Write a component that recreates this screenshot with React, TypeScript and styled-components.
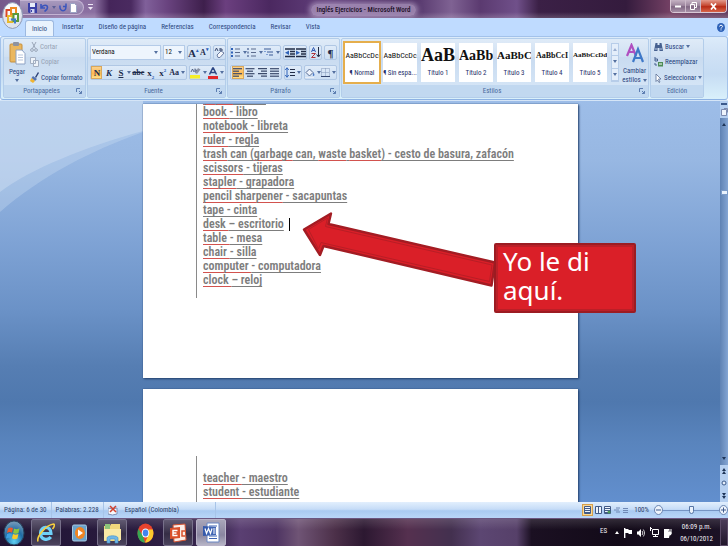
import React from 'react';
import styled, { createGlobalStyle, css } from 'styled-components';

const UI = '"Roboto Condensed", Roboto, "Liberation Sans", sans-serif';
const SERIF = '"Liberation Serif", serif';

const GlobalStyle = createGlobalStyle`
  * { box-sizing: border-box; }
  body { margin: 0; font-family: ${UI}; font-size: 7px; line-height: 10px; color: #33456b; }
  button, select, input { font: inherit; color: inherit; margin: 0; padding: 0; border: 0; background: none; }
  svg { display: block; flex: none; }
  ul { margin: 0; padding: 0; list-style: none; }
`;

/* ---------- window ---------- */

const Desktop = styled.div`
  position: relative;
  display: flex;
  flex-direction: column;
  width: 100%;
  height: 100vh;
  overflow: hidden;
`;

const TitleBar = styled.header`
  display: flex;
  align-items: flex-start;
  height: 18px;
  background:
    linear-gradient(180deg, transparent 12px, #ffffff30 18px),
    linear-gradient(90deg, #75588b 0, #8b70a3 10%, #8a6fa0 13%, #45255a 15%, #4a2a60 18%, #80609a 20%, #69437f 23%, #3e1f4c 28%, #6b3f7f 31%, #4b2860 37%, #62407c 45%, #4c2d63 56%, #7f6293 62%, #5b3a70 66%, #70508a 71%, #3b2046 74%, #341b3d 86%, #734064 92%, #603a5e 100%);
`;

const QuickAccess = styled.nav`
  display: flex;
  align-items: center;
  gap: 3px;
  height: 15px;
  margin-left: 20px;
  padding: 0 6px 0 8px;
  border: 1px solid #c3b3d2;
  border-left: 0;
  border-radius: 0 8px 8px 0;
  background: linear-gradient(#a799bd, #8d7ba8);
`;

const PlainButton = styled.button`
  display: flex;
  align-items: center;
  justify-content: center;
`;

const MoreButton = styled(PlainButton)`
  margin: 4px 0 0 4px;
`;

const WindowTitle = styled.h1`
  flex: 1;
  margin: 0;
  padding-right: 36px;
  font-size: 7px;
  font-weight: 500;
  line-height: 20px;
  text-align: center;
  color: #1c1027;
`;

const TitleGlow = styled.span`
  padding: 2px 6px;
  border-radius: 6px;
  background: #b7a2c8b0;
  box-shadow: 0 0 5px 2px #b7a2c8b0;
`;

const WindowButtons = styled.div`
  display: flex;
  height: 13px;
  margin-right: 1px;
  border: 1px solid #d9c9d6;
  border-top: 0;
  border-radius: 0 0 4px 4px;
  overflow: hidden;
`;

const WindowButton = styled(PlainButton)<{ $close?: boolean }>`
  width: ${p => (p.$close ? 25 : 15)}px;
  border-right: ${p => (p.$close ? 0 : '1px solid #cbb9c9')};
  background: ${p =>
    p.$close ? 'linear-gradient(#e39a8c, #c64b35 45%, #b82c17 55%, #d8654a)' : 'linear-gradient(#c5b3c4, #98819a 50%, #7f6783 55%, #a891a8)'};
`;

const OfficeButton = styled(PlainButton)`
  position: absolute;
  left: 2px;
  top: 2px;
  border-radius: 50%;
`;

/* ---------- ribbon ---------- */

const TabBar = styled.div`
  display: flex;
  align-items: stretch;
  height: 18px;
  padding: 0 3px 0 25px;
  background: #bfdbff;
`;

const Tab = styled.button<{ $active?: boolean }>`
  padding: 0 8px 0 7px;
  line-height: 19px;
  color: #2b4680;
  ${p =>
    p.$active &&
    css`
      padding: 0 6px;
      margin: 2px 1px 0 0;
      line-height: 16px;
      border: 1px solid #9db9e0;
      border-bottom: 0;
      border-radius: 3px 3px 0 0;
      background: #e9f3fd;
    `}
`;

const HelpButton = styled(PlainButton)`
  margin-left: auto;
`;

const Ribbon = styled.section`
  display: flex;
  gap: 1px;
  height: 64px;
  padding: 1px 23px 1px 2px;
  border: 1px solid #a3c2ea;
  border-bottom: 1px solid #8db2e3;
  border-radius: 3px;
  background: linear-gradient(#dcebfa, #cfe1f5 30%, #c6dcf3 60%, #d9f0fb);
`;

const Group = styled.section<{ $width?: number }>`
  display: flex;
  flex-direction: column;
  flex: ${p => (p.$width ? `0 0 ${p.$width}px` : '1 1 0')};
  min-width: 0;
  border: 1px solid #b3cdea;
  border-radius: 2px;
  background: linear-gradient(#dfebf8, #d0e0f2 30%, #c9dbf0 32%, #d8e8f8);
`;

const GroupBody = styled.div`
  display: flex;
  flex: 1;
  min-height: 0;
`;

const GroupLabel = styled.footer`
  display: flex;
  align-items: center;
  height: 12px;
  padding: 0 3px;
  background: #c1d8f0;
  color: #4a6a9c;
  line-height: 12px;
`;

const GroupName = styled.span`
  flex: 1;
  text-align: center;
`;

const PasteButton = styled(PlainButton)`
  flex-direction: column;
  justify-content: flex-start;
  width: 26px;
  padding-top: 2px;
  color: #2b4680;
  gap: 2px;
`;

const CommandList = styled.div<{ $inset?: boolean }>`
  display: flex;
  flex-direction: column;
  justify-content: space-between;
  flex: 1;
  padding: 1px 0 1px ${p => (p.$inset ? 3 : 0)}px;
`;

const Command = styled.button<{ $disabled?: boolean }>`
  display: flex;
  align-items: center;
  gap: 2px;
  height: 13px;
  white-space: nowrap;
  color: ${p => (p.$disabled ? '#96a2b4' : '#25417c')};
`;

const Rows = styled.div`
  display: flex;
  flex: 1;
  flex-direction: column;
  justify-content: space-between;
  padding: 6px 2px 5px;
`;

const ToolRow = styled.div`
  display: flex;
  align-items: center;
  gap: 2px;
  height: 15px;
`;

const ToolSet = styled.div<{ $grow?: number }>`
  display: flex;
  align-items: center;
  justify-content: space-around;
  flex: ${p => p.$grow ?? 1} 1 0;
  height: 15px;
  border: 1px solid #b0c7e4;
  border-radius: 2px;
  background: linear-gradient(#dfebf9, #cddff3);
`;

const Tool = styled(PlainButton)<{ $on?: boolean }>`
  gap: 2px;
  min-width: 11px;
  height: 13px;
  ${p =>
    p.$on &&
    css`
      border: 1px solid #d9a85c;
      background: linear-gradient(#fbd28e, #ffb94f 60%, #ffe08c);
    `}
`;

const Letter = styled.span<{ $size?: number; $italic?: boolean; $line?: string }>`
  font-family: ${SERIF};
  font-size: ${p => p.$size ?? 9}px;
  font-weight: 700;
  font-style: ${p => (p.$italic ? 'italic' : 'normal')};
  text-decoration: ${p => p.$line ?? 'none'};
  line-height: 12px;
  color: #1d2b4c;
`;

const Small = styled.span<{ $up?: boolean }>`
  font-size: 5px;
  vertical-align: ${p => (p.$up ? 'super' : 'sub')};
  line-height: 1px;
  color: #2a5db8;
`;

const PickerBox = styled.div<{ $width: number }>`
  display: grid;
  align-items: center;
  justify-items: end;
  flex: 0 0 ${p => p.$width}px;
  height: 15px;
  padding-right: 2px;
  border: 1px solid #b4cbe8;
  background: #eef5fd;
  & > * { grid-area: 1 / 1; }
  & > svg { pointer-events: none; }
`;

const Picker = styled.select`
  appearance: none;
  width: 100%;
  height: 13px;
  padding-left: 1px;
  font-size: 7px;
  line-height: 13px;
  color: #111;
`;

const Styles = styled.div`
  display: flex;
  flex: 1;
  gap: 4px;
  min-width: 0;
  padding: 4px 2px 3px 3px;
`;

const StyleCard = styled.button<{ $selected?: boolean }>`
  display: flex;
  flex-direction: column;
  align-items: center;
  flex: 1 1 0;
  min-width: 0;
  overflow: hidden;
  background: #fff;
  color: #26306a;
  outline: ${p => (p.$selected ? '2px solid #e5ae4c' : 'none')};
`;

const Preview = styled.span<{ $size: number; $sans?: boolean }>`
  width: 100%;
  height: 25px;
  font-family: ${p => (p.$sans ? UI : SERIF)};
  font-size: ${p => p.$size}px;
  font-weight: ${p => (p.$sans ? 400 : 700)};
  line-height: 25px;
  text-align: center;
  white-space: nowrap;
  color: #111;
`;

const GalleryScroll = styled.div`
  display: flex;
  flex-direction: column;
  flex: 0 0 8px;
  border: 1px solid #b7cde9;
  background: #e4eefa;
`;

const GalleryButton = styled(PlainButton)`
  flex: 1;
  border-bottom: 1px solid #b7cde9;
`;

const ChangeStyles = styled(PlainButton)`
  flex: 0 0 27px;
  flex-direction: column;
  justify-content: flex-start;
  gap: 3px;
  padding-top: 4px;
  line-height: 9px;
  color: #25417c;
`;

const Inline = styled.span`
  display: flex;
  align-items: center;
  gap: 2px;
`;

/* ---------- document ---------- */

const Workspace = styled.main`
  display: flex;
  flex: 1;
  min-height: 0;
  border-top: 1px solid #d5e5f7;
  background: linear-gradient(#9dbde8 0, #97b7e2 15%, #7fa3d5 35%, #6b92c7 52%, #567eb3 66%, #4f78ae 75%, #5984bd 85%, #628fce 100%);
`;

const Canvas = styled.div`
  position: relative;
  display: flex;
  flex: 1;
  flex-direction: column;
  gap: 11px;
  min-width: 0;
  padding: 3px 142px 0 143px;
  overflow: hidden;
`;

const Backdrop = styled.svg`
  position: absolute;
  left: 0;
  top: 0;
`;

const Paper = styled.article<{ $lead?: number; $tail?: number }>`
  position: relative;
  flex: none;
  padding: ${p => p.$lead ?? 0}px 20px ${p => p.$tail ?? 0}px 53px;
  background: #fff;
  box-shadow: 1px 1px 2px #23406b, 0 0 1px #31517f;
`;

const Clip = styled.div`
  overflow: hidden;
`;

const WordList = styled.ul<{ $cut?: boolean }>`
  padding: ${p => (p.$cut ? '0 0 11px 6px' : '15px 0 30px 6px')};
  margin-top: ${p => (p.$cut ? -13 : 0)}px;
  border-left: 1px solid #8a8a8a;
`;

const Entry = styled.li`
  font-size: 12px;
  font-weight: 600;
  line-height: 14px;
  white-space: nowrap;
  color: #7d7d7d;
`;

const Word = styled.span<{ $flagged?: boolean }>`
  text-decoration: underline 1px ${p => (p.$flagged ? '#d2524e' : '#7d7d7d')};
  text-underline-offset: 2px;
  text-decoration-skip-ink: none;
`;

const TextCaret = styled.span`
  display: inline-block;
  width: 1px;
  height: 13px;
  margin-left: 5px;
  vertical-align: middle;
  background: #000;
`;

const Arrow = styled.svg`
  position: absolute;
  left: 159px;
  top: 107px;
`;

const Callout = styled.aside`
  position: absolute;
  left: 351px;
  top: 139px;
  width: 142px;
  padding: 2px 6px 6px 7px;
  border: 2px solid #9c1c22;
  border-radius: 2px;
  background: #da1f28;
  box-shadow: inset 0 0 0 2px #bb1f27;
  font-family: "Noto Sans", "Open Sans", sans-serif;
  font-size: 26px;
  line-height: 29px;
  color: #fff;
`;

const ScrollBar = styled.aside`
  display: flex;
  flex-direction: column;
  align-items: center;
  flex: 0 0 8px;
  background: #a9c6ec;
`;

const ScrollTrack = styled.div`
  display: flex;
  flex-direction: column;
  align-items: center;
  flex: 1;
  width: 100%;
  padding: 5px 0;
  background: linear-gradient(90deg, #5f82b3, #84a5d3);
`;

const ScrollThumb = styled.button`
  width: 7px;
  height: 5px;
  margin: 64px 0 auto;
  border: 1px solid #7b9bc8;
  background: #eaf2fc;
`;

const ScrollEnd = styled.div`
  display: flex;
  flex-direction: column;
  align-items: center;
  justify-content: space-around;
  width: 100%;
  height: 37px;
  background: #b5cff0;
`;

const ScrollHead = styled(ScrollEnd)`
  height: 17px;
`;

/* ---------- status bar ---------- */

const StatusBar = styled.footer`
  display: flex;
  align-items: stretch;
  height: 16px;
  line-height: 16px;
  background: linear-gradient(#e2effd, #c6dcf7 45%, #a9caf1 55%, #b9d6f8);
  color: #2b4068;
`;

const StatusItem = styled.div<{ $edge?: boolean }>`
  display: flex;
  align-items: center;
  padding: 0 4px;
  border-right: ${p => (p.$edge ? '1px solid #a7c4e8' : '0')};
`;

const LanguageItem = styled(StatusItem)`
  padding: 0 36px 0 3px;
`;

const ViewButtons = styled.div`
  display: flex;
  align-items: center;
  gap: 1px;
  margin-left: auto;
`;

const ViewButton = styled(PlainButton)<{ $on?: boolean }>`
  width: ${p => (p.$on ? 11 : 8)}px;
  height: 12px;
  border: ${p => (p.$on ? '1px solid #d59f4c' : '0')};
  background: ${p => (p.$on ? '#fbd894' : 'none')};
`;

const ZoomLabel = styled.span`
  padding: 0 5px;
`;

const ZoomSlider = styled.input`
  appearance: none;
  width: 56px;
  height: 16px;
  background: linear-gradient(#7594c4, #7594c4) center / 100% 1px no-repeat;
  &::-webkit-slider-thumb {
    appearance: none;
    width: 5px;
    height: 8px;
    border: 1px solid #5776a6;
    border-radius: 0 0 3px 3px;
    background: #e9f1fb;
  }
`;

/* ---------- taskbar ---------- */

const TaskBar = styled.footer`
  display: flex;
  align-items: stretch;
  height: 28px;
  border-top: 1px solid #6b5680;
  background:
    linear-gradient(180deg, #ffffff22, transparent 40%),
    linear-gradient(90deg, #201333 0, #2a1c40 20%, #3a2750 30%, #5a3f72 33%, #4f3563 38%, #6f5475 41%, #4c3049 46%, #2c1831 50%, #55304f 56%, #43304f 62%, #5c4672 66%, #564069 71%, #1b1022 73%, #120a18 85%, #1c1226 100%);
`;

const StartButton = styled(PlainButton)`
  width: 31px;
  padding-right: 3px;
`;

const TaskButton = styled(PlainButton)<{ $state?: 'open' | 'active' }>`
  width: 30px;
  margin-right: 3px;
  border-radius: 2px;
  ${p =>
    p.$state &&
    css`
      border: 1px solid ${p.$state === 'active' ? '#b9b3c8' : '#77708a'};
      background: ${p.$state === 'active' ? 'linear-gradient(#a9a6b9, #8a86a0 60%, #b6b4c6)' : 'linear-gradient(#615a72, #352d45 55%, #4b435d)'};
    `}
`;

const Tray = styled.div`
  display: flex;
  align-items: center;
  gap: 5px;
  margin-left: auto;
  color: #f1eef5;
`;

const Clock = styled.time`
  margin: 0 2px 0 3px;
  font-size: 7px;
  line-height: 12px;
  text-align: center;
`;

const ShowDesktop = styled.button`
  align-self: stretch;
  width: 8px;
  border: 1px solid #5a4a66;
  background: linear-gradient(#4a3b57, #21162b);
`;

const TrayLanguage = styled.span`
  margin: 0 3px 4px 0;
`;

/* ---------- icons ---------- */

const Caret = ({ up, c = '#5470a0' }: { up?: boolean; c?: string }) => (
  <svg width="4" height="3" viewBox="0 0 4 3"><path d={up ? 'M0 3h4L2 0z' : 'M0 0h4L2 3z'} fill={c} /></svg>
);
const Launcher = () => (
  <svg width="6" height="6" viewBox="0 0 6 6" fill="none" stroke="#5c7db0"><path d="M.5 4V.5H4M3 3l2.500 2.500M5.500 3v2.500H3" /></svg>
);
const SaveIcon = () => (
  <svg width="9" height="10" viewBox="0 0 9 10"><path d="M0 0h9v10H1L0 9z" fill="#3a3fa6" /><path d="M2 0h5v4H2z" fill="#e8ecfa" /><path d="M2.500 6h4v4h-4z" fill="#cdd2ef" /><path d="M3 7h1v2H3z" fill="#3a3fa6" /></svg>
);
const UndoIcon = () => (
  <svg width="9" height="9" viewBox="0 0 9 9"><path d="M1 1v4h4M1.500 4.500C3 1.500 7.500 1.500 7.500 4.500 7.500 6.500 6 7.500 4.500 8.500" fill="none" stroke="#3b55bd" strokeWidth="1.600" /></svg>
);
const RedoIcon = () => (
  <svg width="8" height="9" viewBox="0 0 8 9"><path d="M1 2.500C.6 6 2 7.700 4 7.700S7.500 6 6.500 2.500M4 3.500h3V.5" fill="none" stroke="#3b55bd" strokeWidth="1.500" /></svg>
);
const PageIcon = () => (
  <svg width="7" height="10" viewBox="0 0 7 10"><path d="M.5.5h4l2 2v7h-6z" fill="#fff" stroke="#9aa3c4" /></svg>
);
const OfficeLogo = () => (
  <svg width="21" height="27" viewBox="0 0 21 27">
    <ellipse cx="10.500" cy="13.500" rx="10" ry="13" fill="#dfe3ec" stroke="#8e9ab4" />
    <ellipse cx="10.500" cy="9" rx="8" ry="7.500" fill="#fff" opacity=".8" />
    <g fill="none" strokeWidth="2">
      <rect x="4.500" y="8" width="4.500" height="6" stroke="#d8482a" />
      <rect x="9" y="6" width="5" height="6" stroke="#ee8a23" />
      <rect x="6" y="14" width="4.500" height="6" stroke="#e7b92c" />
      <rect x="11.500" y="12" width="4.500" height="7" stroke="#5a9a3c" />
      <path d="M9 17.500h4v4" stroke="#3f7ccb" />
    </g>
  </svg>
);
const HelpIcon = () => (
  <svg width="8" height="9" viewBox="0 0 8 9"><ellipse cx="4" cy="4.500" rx="4" ry="4.500" fill="#2e62b8" /><path d="M2.500 3.500C2.500 1.800 5.600 1.800 5.600 3.500 5.600 4.500 4 4.400 4 5.600M4 6.400v1" fill="none" stroke="#fff" /></svg>
);
const PasteIcon = () => (
  <svg width="17" height="24" viewBox="0 0 17 24">
    <rect x="1" y="3" width="12" height="18" rx="1" fill="#eab75f" stroke="#c68f3c" /><rect x="4" y="1" width="6" height="4" rx="1" fill="#8e93a0" />
    <path d="M7 9h6l3 3.500V23H7z" fill="#fff" stroke="#8ea2c4" /><path d="M9 14h5M9 16.500h5M9 19h5" stroke="#b9c6dc" />
  </svg>
);
const CutIcon = () => (
  <svg width="8" height="10" viewBox="0 0 8 10" fill="none" stroke="#9aa6b8"><path d="M2 0l3.500 6.500M6 0L2.500 6.500" /><circle cx="2" cy="8" r="1.400" /><circle cx="6" cy="8" r="1.400" /></svg>
);
const CopyIcon = () => (
  <svg width="9" height="10" viewBox="0 0 9 10" fill="#eef3f9" stroke="#a3afc2"><path d="M.5.5h5v6h-5zM3.500 3.500h5v6h-5z" /></svg>
);
const BrushIcon = () => (
  <svg width="9" height="11" viewBox="0 0 9 11"><path d="M5 5l3-5 1 1-3 5z" fill="#2d4278" /><path d="M3 4l4 3-2 2L1.500 6z" fill="#5573ae" /><path d="M1.500 6L5 9l-2 2-3-2z" fill="#f0b430" /></svg>
);
const Lines = ({ w, centered }: { w: number[]; centered?: boolean }) => (
  <svg width="10" height="9" viewBox="0 0 10 9">
    {w.map((n, i) => <path key={i} d={`M${centered ? (10 - n) / 2 : 0} ${i * 2.5 + 0.7}h${n}`} stroke="#3b4a6b" strokeWidth="1.200" />)}
  </svg>
);
const ListIcon = ({ lead }: { lead: string }) => (
  <svg width="10" height="9" viewBox="0 0 10 9"><path d="M4 1h5M4 4.500h5M4 8h5" stroke="#5a6a8c" /><path d="M0 1h2M0 4.500h2M0 8h2" stroke={lead} strokeWidth="2" /></svg>
);
const LevelIcon = () => (
  <svg width="10" height="9" viewBox="0 0 10 9" stroke="#3b5a96"><path d="M0 1h7M3 4h6M5 7h4" /><path d="M1 3v1M3 6v1" stroke="#2a5db8" /></svg>
);
const IndentIcon = ({ out }: { out?: boolean }) => (
  <svg width="10" height="10" viewBox="0 0 10 10"><path d="M0 1h10M5 3.500h5M5 6h5M0 8.500h10" stroke="#222c46" strokeWidth="1.300" /><path d={out ? 'M4 2.500v4.500L0 4.700z' : 'M0 2.500v4.500l4-2.300z'} fill="#2f62b8" /></svg>
);
const SortIcon = () => (
  <svg width="10" height="11" viewBox="0 0 10 11" fill="none"><path d="M.5 5L2.500.5 4.500 5M1.200 3.500h2.600" stroke="#2f58b0" /><path d="M.5 6.500h4l-4 4h4" stroke="#b0343c" /><path d="M7.500 0v9M5.700 7.500l1.800 2.500 1.800-2.500" stroke="#222c46" /></svg>
);
const SpacingIcon = () => (
  <svg width="10" height="11" viewBox="0 0 10 11"><path d="M2 1v9M.3 3L2 .7 3.700 3M.3 8L2 10.300 3.700 8" fill="none" stroke="#2f62b8" /><path d="M5 2.500h5M5 5.500h5M5 8.500h5" stroke="#222c46" /></svg>
);
const BucketIcon = () => (
  <svg width="10" height="10" viewBox="0 0 10 10"><path d="M1 4.500L4.500 1 8 4.500 4.500 8z" fill="#eef3fb" stroke="#566b93" /><path d="M8.500 4.500C10 6.500 9.500 8 8.500 8S7.500 6.500 8.500 4.500z" fill="#4a78c4" /><path d="M0 9.500h9" stroke="#e9edf5" /></svg>
);
const BorderIcon = () => (
  <svg width="9" height="9" viewBox="0 0 9 9" fill="none"><path d="M.5.500h8v8h-8zM4.500.500v8M.5 4.500h8" stroke="#8396b8" strokeDasharray="1 1" /><path d="M0 8.500h9" stroke="#34466e" /></svg>
);
const EraserIcon = () => (
  <svg width="11" height="11" viewBox="0 0 11 11"><path d="M1 4L2.500 1 4 4M6 1v3h2V2H6" fill="none" stroke="#3a4a70" /><path d="M3 8l4-4 3 2-4 4.500H4z" fill="#f5f7fb" stroke="#6d7ea2" /></svg>
);
const MarkerIcon = () => (
  <svg width="11" height="12" viewBox="0 0 11 12"><path d="M1 5l1.500-3L4 5M5 1.500V5h1.500V3H5" fill="none" stroke="#38476c" strokeWidth=".8" /><path d="M5 6l3-5 2.500 1.500L7 7z" fill="#8b93a6" /><rect y="8" width="10" height="3.500" fill="#f5ee27" /></svg>
);
const BigAIcon = () => (
  <svg width="20" height="21" viewBox="0 0 20 21" fill="none">
    <path d="M2 13L6.500 2 11 13M3.500 9h6" stroke="#b04fc0" strokeWidth="2.200" /><path d="M8 19L13 6l5 13M9.500 15h7" stroke="#3e78c8" strokeWidth="2.200" />
  </svg>
);
const FindIcon = () => (
  <svg width="9" height="10" viewBox="0 0 9 10"><path d="M1.500 1h2v2h2V1h2L9 9H5.500V6h-2v3H0z" fill="#46608f" /><path d="M1 7h2M6 7h2" stroke="#b9c9e4" /></svg>
);
const ReplaceIcon = () => (
  <svg width="9" height="10" viewBox="0 0 9 10"><path d="M1 0v4h2.500V2H1M1 6v2h2" fill="none" stroke="#46608f" /><path d="M4 5h5v4.500H4z" fill="#4d8b55" /><path d="M5 7h3" stroke="#fff" /></svg>
);
const SelectIcon = () => (
  <svg width="8" height="10" viewBox="0 0 8 10"><path d="M2 1l5 5H4.500L6 9l-1 .5L3.500 7 2 8.500z" fill="#fff" stroke="#5a6e96" strokeWidth=".8" /></svg>
);
const ProofIcon = () => (
  <svg width="10" height="11" viewBox="0 0 10 11"><path d="M0 3l4.500 1L9 3v6L4.500 10 0 9z" fill="#f6f8fc" stroke="#7f8fb4" /><path d="M2 1l6 6M8 1L2 7" stroke="#d0412e" strokeWidth="1.500" /></svg>
);
const ViewIcon = ({ kind }: { kind: number }) => (
  <svg width="7" height="8" viewBox="0 0 7 8" fill="none" stroke={kind > 2 ? '#7089b5' : '#425a86'}>
    {kind < 3 && <path d="M.5.500h6v7h-6z" fill="#eef4fc" />}
    <path d={kind === 1 ? 'M3.500 1v6' : kind === 3 ? 'M3 2h4M1 4h5M3 6h4' : 'M1 2.500h5M1 4.500h5M1 6.500h5'} />
    {kind === 2 && <circle cx="5" cy="6" r="1.500" fill="#4a9a58" stroke="none" />}
  </svg>
);
const ZoomIcon = ({ plus }: { plus?: boolean }) => (
  <svg width="9" height="10" viewBox="0 0 9 10" stroke="#6a84b0"><ellipse cx="4.500" cy="5" rx="4" ry="4.500" fill="#eef4fc" /><path d={plus ? 'M2 5h5M4.500 2.500v5' : 'M2 5h5'} stroke="#3f5a8c" /></svg>
);
const WindowsLogo = () => (
  <svg width="22" height="26" viewBox="0 0 22 26">
    <defs><radialGradient id="orb" cx=".5" cy=".85" r=".9"><stop offset="0" stopColor="#5fd0f2" /><stop offset=".5" stopColor="#1f6ba5" /><stop offset="1" stopColor="#8aa6bd" /></radialGradient></defs>
    <ellipse cx="11" cy="13" rx="10" ry="12" fill="url(#orb)" stroke="#26455f" />
    <path d="M5 8.500c2-1.500 3.500-1.200 5-.3l-1 4.500c-1.500-.8-3-1-5 .3z" fill="#ee5a2a" /><path d="M11 8.500c2 1 3.500.8 5.500-.2l-1 4.700c-2 1-3.500 1-5.400 0z" fill="#8cc63e" />
    <path d="M4 14c2-1.200 3.500-1 5-.2l-1 4.400c-1.500-.8-3-.8-5 .4z" fill="#3fa0e0" /><path d="M10 14c2 1 3.500.8 5.400 0l-1 4.500c-2 1-3.500.8-5.400-.2z" fill="#fbc926" />
  </svg>
);
const IeLogo = () => (
  <svg width="18" height="22" viewBox="0 0 18 22" fill="none">
    <path d="M13.800 15c-3 4-10.300 3-10.300-4C3.500 3.500 14 3.500 14 11.500H5" stroke="#6fd0f8" strokeWidth="3.200" />
    <path d="M1 19.500C-.5 15 8 3.500 16.500 2c1.500 0 1 3-1 5" stroke="#f6cf3e" strokeWidth="1.600" />
  </svg>
);
const PlayerLogo = () => (
  <svg width="15" height="18" viewBox="0 0 15 18"><rect x=".5" y="1" width="14" height="16" rx="1.500" fill="#6aa3cb" stroke="#a8c9e2" /><ellipse cx="8" cy="9" rx="5" ry="6" fill="#f08421" /><path d="M6 5.500v7l5-3.500z" fill="#fff" /></svg>
);
const FolderLogo = () => (
  <svg width="19" height="22" viewBox="0 0 19 22"><path d="M1 4h6l1-2h9v17H1z" fill="#f0d77c" /><path d="M2 2h5v5H2z" fill="#8cc57a" /><path d="M1 7h17v11H1z" fill="#f9e9a6" /><path d="M4 21v-5c0-3 11-3 11 0v5h-3v-4H7v4z" fill="#6fb7e6" stroke="#3f8fc9" strokeWidth=".6" /></svg>
);
const ChromeLogo = () => (
  <svg width="17" height="20" viewBox="0 0 17 20">
    <ellipse cx="8.500" cy="10" rx="8" ry="9.500" fill="#e8432e" /><path d="M1.300 5.800L6 13l2 6.500C2 19.500-1 12 1.300 5.800z" fill="#36a852" /><path d="M8 19.500L11.500 12V6.500h4.300C18 13 14 19.500 8 19.500z" fill="#fbca2d" />
    <ellipse cx="8.500" cy="10" rx="3.800" ry="4.500" fill="#fff" /><ellipse cx="8.500" cy="10" rx="2.800" ry="3.400" fill="#4384ee" />
  </svg>
);
const PptLogo = () => (
  <svg width="17" height="20" viewBox="0 0 17 20"><path d="M3 2l12-1 1 16-12 2z" fill="#fbeee8" stroke="#d35230" /><path d="M0 5l10-1v11L0 16z" fill="#d9502b" /><path d="M7.500 7.500H3v5h4.500M3 10h3.500" fill="none" stroke="#fff" strokeWidth="1.400" /><path d="M15 8h-3v5h3" fill="none" stroke="#d9502b" strokeWidth="1.500" /></svg>
);
const WordLogo = () => (
  <svg width="17" height="21" viewBox="0 0 17 21"><path d="M4 1h12v19H4z" fill="#fff" stroke="#6b87c4" /><path d="M6 4h8M6 14h8M6 16.500h8" stroke="#3c62b4" /><path d="M0 4l13 1v8L0 14z" fill="#2b54ac" opacity=".9" /><path d="M2 6.500l1.500 5 2-5 2 5 1.500-5M10 7h2.500M10 9h2.500M10 11h2.500" fill="none" stroke="#fff" strokeWidth="1.200" /></svg>
);
const FlagIcon = () => (
  <svg width="8" height="10" viewBox="0 0 8 10"><path d="M.7 0v10" stroke="#fff" strokeWidth="1.400" /><path d="M1 1h3l1 1h3v4H5L4 5H1z" fill="#fff" /></svg>
);
const SpeakerIcon = () => (
  <svg width="8" height="10" viewBox="0 0 8 10"><path d="M0 3.500h1.500L4 1v8L1.500 6.500H0z" fill="#fff" /><path d="M5 3c1 1.300 1 2.700 0 4M6.300 1.500c1.600 2.200 1.600 4.800 0 7" fill="none" stroke="#fff" strokeWidth=".8" /></svg>
);
const NetworkIcon = () => (
  <svg width="9" height="11" viewBox="0 0 9 11" fill="none" stroke="#fff"><path d="M2.500 2.500h6v5h-6zM3 9.500h5M5.500 7.500v2" /><path d="M.5 0v4M0 1.500h2" /></svg>
);
const PowerIcon = () => (
  <svg width="8" height="11" viewBox="0 0 8 11"><path d="M0 2h5v9H0z" fill="#fff" /><path d="M4 4h4v3L6 9v2" fill="#fff" stroke="#1a1022" strokeWidth=".6" /><path d="M5 2v2M7 2v2" stroke="#fff" /></svg>
);

/* ---------- content ---------- */

const tabs = ['Inicio', 'Insertar', 'Diseño de página', 'Referencias', 'Correspondencia', 'Revisar', 'Vista'];

const gallery: { text: string; name: string; size: number; sans?: boolean }[] = [
  { text: 'AaBbCcDc', name: '¶ Normal', size: 8, sans: true },
  { text: 'AaBbCcDc', name: '¶ Sin espa...', size: 8, sans: true },
  { text: 'AaB', name: 'Título 1', size: 18 },
  { text: 'AaBb', name: 'Título 2', size: 14 },
  { text: 'AaBbC', name: 'Título 3', size: 11 },
  { text: 'AaBbCcI', name: 'Título 4', size: 8 },
  { text: 'AaBbCcDd', name: 'Título 5', size: 7 },
];

type Part = string | { bad: string };
const bad = (s: string): Part => ({ bad: s });

const classroom: Part[][] = [
  [bad('paper '), '- papel'],
  [bad('book '), '- libro'],
  [bad('notebook'), ' - libreta'],
  [bad('ruler '), '- regla'],
  [bad('trash'), ' can (', bad('garbage'), ' can, ', bad('waste'), ' ', bad('basket'), ') - cesto de basura, zafacón'],
  [bad('scissors'), ' - tijeras'],
  [bad('stapler'), ' - grapadora'],
  [bad('pencil sharpener'), ' - sacapuntas'],
  ['tape - cinta'],
  [bad('desk '), '– escritorio'],
  [bad('table '), '- mesa'],
  [bad('chair '), '- silla'],
  [bad('computer '), '- computadora'],
  [bad('clock '), '– reloj'],
];
const people: Part[][] = [
  [bad('teacher '), '- maestro'],
  [bad('student '), '- estudiante'],
];

const Words = ({ parts, caret }: { parts: Part[]; caret?: boolean }) => (
  <Entry>
    {parts.map((p, i) => (typeof p === 'string' ? <Word key={i}>{p}</Word> : <Word key={i} $flagged>{p.bad}</Word>))}
    {caret && <TextCaret />}
  </Entry>
);

const RibbonGroup = ({ name, width, launcher, children }: { name: string; width?: number; launcher?: boolean; children: React.ReactNode }) => (
  <Group $width={width} aria-label={name}>
    <GroupBody>{children}</GroupBody>
    <GroupLabel>
      <GroupName>{name}</GroupName>
      {launcher && <PlainButton aria-label={`Opciones de ${name}`}><Launcher /></PlainButton>}
    </GroupLabel>
  </Group>
);

export default function App() {
  return (
    <Desktop>
      <GlobalStyle />
      <TitleBar>
        <QuickAccess aria-label="Acceso rápido">
          <PlainButton aria-label="Guardar"><SaveIcon /></PlainButton>
          <PlainButton aria-label="Deshacer"><UndoIcon /></PlainButton>
          <Caret c="#5d5f96" />
          <PlainButton aria-label="Rehacer"><RedoIcon /></PlainButton>
          <PlainButton aria-label="Nuevo"><PageIcon /></PlainButton>
        </QuickAccess>
        <MoreButton aria-label="Más comandos">
          <svg width="5" height="7" viewBox="0 0 5 7"><path d="M0 .5h5" stroke="#eee6f5" /><path d="M0 3h5L2.500 6z" fill="#eee6f5" /></svg>
        </MoreButton>
        <WindowTitle><TitleGlow>Inglés Ejercicios - Microsoft Word</TitleGlow></WindowTitle>
        <WindowButtons>
          <WindowButton aria-label="Minimizar"><svg width="6" height="3"><path d="M0 1.500h6" stroke="#fff" strokeWidth="2" /></svg></WindowButton>
          <WindowButton aria-label="Restaurar"><svg width="7" height="8" viewBox="0 0 7 8" fill="none" stroke="#fff"><path d="M2 2V.5h4.500v5H5M.5 2.500h4v5h-4z" /></svg></WindowButton>
          <WindowButton $close aria-label="Cerrar"><svg width="7" height="7" viewBox="0 0 7 7"><path d="M1 0.500l5 6M6 .5l-5 6" stroke="#fff" strokeWidth="1.800" /></svg></WindowButton>
        </WindowButtons>
      </TitleBar>

      <TabBar role="tablist">
        {tabs.map((t, i) => <Tab key={t} role="tab" aria-selected={i === 0} $active={i === 0}>{t}</Tab>)}
        <HelpButton aria-label="Ayuda"><HelpIcon /></HelpButton>
      </TabBar>
      <OfficeButton aria-label="Botón de Office"><OfficeLogo /></OfficeButton>

      <Ribbon>
        <RibbonGroup name="Portapapeles" width={83} launcher>
          <PasteButton><PasteIcon />Pegar<Caret /></PasteButton>
          <CommandList>
            <Command $disabled><CutIcon />Cortar</Command>
            <Command $disabled><CopyIcon />Copiar</Command>
            <Command><BrushIcon />Copiar formato</Command>
          </CommandList>
        </RibbonGroup>

        <RibbonGroup name="Fuente" width={139} launcher>
          <Rows>
            <ToolRow>
              <PickerBox $width={71}><Picker aria-label="Fuente"><option>Verdana</option></Picker><Caret /></PickerBox>
              <PickerBox $width={22}><Picker aria-label="Tamaño"><option>12</option></Picker><Caret /></PickerBox>
              <ToolSet $grow={2}>
                <Tool aria-label="Agrandar fuente"><Letter $size={11}>A<Small $up>▴</Small></Letter></Tool>
                <Tool aria-label="Encoger fuente"><Letter $size={8}>A<Small $up>▾</Small></Letter></Tool>
              </ToolSet>
              <ToolSet><Tool aria-label="Borrar formato"><EraserIcon /></Tool></ToolSet>
            </ToolRow>
            <ToolRow>
              <ToolSet $grow={8}>
                <Tool $on><Letter>N</Letter></Tool>
                <Tool><Letter $italic>K</Letter></Tool>
                <Tool><Letter $line="underline">S</Letter></Tool>
                <Caret />
                <Tool><Letter $size={8} $line="line-through">abc</Letter></Tool>
                <Tool><Letter>x<Small>2</Small></Letter></Tool>
                <Tool><Letter>x<Small $up>2</Small></Letter></Tool>
                <Tool><Letter $size={8}>Aa</Letter><Caret /></Tool>
              </ToolSet>
              <ToolSet $grow={3}>
                <Tool aria-label="Resaltado"><MarkerIcon /><Caret /></Tool>
                <Tool aria-label="Color de fuente">
                  <svg width="10" height="12" viewBox="0 0 10 12"><path d="M1.500 7.500L4.700 1h.6L8.500 7.500M3 5.500h4" fill="none" stroke="#2c4684" strokeWidth="1.500" /><rect y="9" width="10" height="3" fill="#e3262a" /></svg>
                  <Caret />
                </Tool>
              </ToolSet>
            </ToolRow>
          </Rows>
        </RibbonGroup>

        <RibbonGroup name="Párrafo" width={113} launcher>
          <Rows>
            <ToolRow>
              <ToolSet $grow={5}>
                <Tool aria-label="Viñetas"><ListIcon lead="#2f62b8" /><Caret /></Tool>
                <Tool aria-label="Numeración"><ListIcon lead="#7f93b8" /><Caret /></Tool>
                <Tool aria-label="Lista multinivel"><LevelIcon /><Caret /></Tool>
              </ToolSet>
              <ToolSet $grow={2}>
                <Tool aria-label="Disminuir sangría"><IndentIcon out /></Tool>
                <Tool aria-label="Aumentar sangría"><IndentIcon /></Tool>
              </ToolSet>
              <ToolSet><Tool aria-label="Ordenar"><SortIcon /></Tool></ToolSet>
              <ToolSet><Tool aria-label="Mostrar todo"><Letter $size={11}>¶</Letter></Tool></ToolSet>
            </ToolRow>
            <ToolRow>
              <ToolSet $grow={5}>
                <Tool $on aria-label="Izquierda"><Lines w={[9, 6, 9, 6]} /></Tool>
                <Tool aria-label="Centrar"><Lines w={[9, 6, 9, 6]} centered /></Tool>
                <Tool aria-label="Derecha"><svg width="10" height="9" viewBox="0 0 10 9"><path d="M0 .7h9M3 3.200h6M0 5.700h9M3 8.200h6" stroke="#3b4a6b" strokeWidth="1.200" /></svg></Tool>
                <Tool aria-label="Justificar"><Lines w={[9, 9, 9, 9]} /></Tool>
              </ToolSet>
              <ToolSet $grow={1}><Tool aria-label="Interlineado"><SpacingIcon /><Caret /></Tool></ToolSet>
              <ToolSet $grow={3}>
                <Tool aria-label="Sombreado"><BucketIcon /><Caret /></Tool>
                <Tool aria-label="Bordes"><BorderIcon /><Caret /></Tool>
              </ToolSet>
            </ToolRow>
          </Rows>
        </RibbonGroup>

        <RibbonGroup name="Estilos" launcher>
          <Styles>
            {gallery.map((g, i) => (
              <StyleCard key={g.name} $selected={i === 0}><Preview $size={g.size} $sans={g.sans}>{g.text}</Preview>{g.name}</StyleCard>
            ))}
            <GalleryScroll>
              <GalleryButton aria-label="Arriba"><Caret up c="#9aaed0" /></GalleryButton>
              <GalleryButton aria-label="Abajo"><Caret /></GalleryButton>
              <GalleryButton aria-label="Más"><Caret /></GalleryButton>
            </GalleryScroll>
          </Styles>
          <ChangeStyles><BigAIcon /><span>Cambiar<Inline>estilos <Caret /></Inline></span></ChangeStyles>
        </RibbonGroup>

        <RibbonGroup name="Edición" width={54}>
          <CommandList $inset>
            <Command><FindIcon />Buscar <Caret /></Command>
            <Command><ReplaceIcon />Reemplazar</Command>
            <Command><SelectIcon />Seleccionar <Caret /></Command>
          </CommandList>
        </RibbonGroup>
      </Ribbon>

      <Workspace>
        <Canvas>
          <Backdrop width="143" height="120" viewBox="0 0 143 120">
            <path d="M0 0h143v31C90 50 40 76 0 111z" fill="#d5e4f4" opacity=".3" />
            <path d="M0 0h143v30C85 46 30 68 0 91z" fill="#dce9f6" opacity=".35" />
          </Backdrop>
          <Paper $tail={80}>
            <Clip>
              <WordList $cut>{classroom.map((p, i) => <Words key={i} parts={p} caret={i === 9} />)}</WordList>
            </Clip>
            <Arrow width="196" height="78" viewBox="302 211 196 78" aria-hidden="true">
              <path d="M304 229.500L331 213.500 328.500 224 495 262.500 491.500 285.500 323.500 246 320 255z" fill="#da1f28" stroke="#a31c23" strokeWidth="2.400" strokeLinejoin="round" />
              <path d="M308.500 229.500L327.500 218 325.500 226.500 492 265 489.500 281.500 321 242.500 318.500 249z" fill="none" stroke="#b81e26" />
            </Arrow>
            <Callout>Yo le di aquí.</Callout>
          </Paper>
          <Paper $lead={67}>
            <WordList>{people.map((p, i) => <Words key={i} parts={p} />)}</WordList>
          </Paper>
        </Canvas>
        <ScrollBar aria-label="Desplazamiento">
          <ScrollHead>
            <svg width="6" height="2"><path d="M0 1h6" stroke="#3c5a8c" strokeWidth="2" /></svg>
            <svg width="7" height="8" viewBox="0 0 7 8" fill="#eef4fc" stroke="#7c8bb0"><path d="M.5 1.500h5v6h-5zM3 .5h3.500v4" /></svg>
          </ScrollHead>
          <ScrollTrack>
            <Caret up c="#1f3558" />
            <ScrollThumb aria-label="Posición" />
            <Caret c="#1f3558" />
          </ScrollTrack>
          <ScrollEnd>
            <svg width="4" height="6"><path d="M0 3l2-3 2 3zM0 6l2-3 2 3z" fill="#1f3558" /></svg>
            <svg width="6" height="6"><circle cx="3" cy="3" r="2" fill="#e6effa" stroke="#3c5a8c" /></svg>
            <svg width="4" height="6"><path d="M0 0l2 3 2-3zM0 3l2 3 2-3z" fill="#1f3558" /></svg>
          </ScrollEnd>
        </ScrollBar>
      </Workspace>

      <StatusBar>
        <StatusItem $edge>Página: 6 de 30</StatusItem>
        <StatusItem $edge>Palabras: 2.228</StatusItem>
        <StatusItem><ProofIcon /></StatusItem>
        <LanguageItem $edge>Español (Colombia)</LanguageItem>
        <ViewButtons>
          {[0, 1, 2, 3, 4].map(k => <ViewButton key={k} $on={k === 0} aria-label={`Vista ${k + 1}`}><ViewIcon kind={k} /></ViewButton>)}
        </ViewButtons>
        <ZoomLabel>100%</ZoomLabel>
        <PlainButton aria-label="Alejar"><ZoomIcon /></PlainButton>
        <ZoomSlider type="range" aria-label="Zoom" defaultValue={50} />
        <PlainButton aria-label="Acercar"><ZoomIcon plus /></PlainButton>
      </StatusBar>

      <TaskBar>
        <StartButton aria-label="Inicio"><WindowsLogo /></StartButton>
        <TaskButton $state="open" aria-label="Internet Explorer"><IeLogo /></TaskButton>
        <TaskButton aria-label="Reproductor"><PlayerLogo /></TaskButton>
        <TaskButton $state="open" aria-label="Explorador"><FolderLogo /></TaskButton>
        <TaskButton aria-label="Chrome"><ChromeLogo /></TaskButton>
        <TaskButton $state="open" aria-label="PowerPoint"><PptLogo /></TaskButton>
        <TaskButton $state="active" aria-label="Word"><WordLogo /></TaskButton>
        <Tray>
          <TrayLanguage>ES</TrayLanguage>
          <Caret up c="#fff" />
          <FlagIcon />
          <SpeakerIcon />
          <NetworkIcon />
          <PowerIcon />
          <Clock>06:09 p.m.<br />06/10/2012</Clock>
          <ShowDesktop aria-label="Mostrar escritorio" />
        </Tray>
      </TaskBar>
    </Desktop>
  );
}
